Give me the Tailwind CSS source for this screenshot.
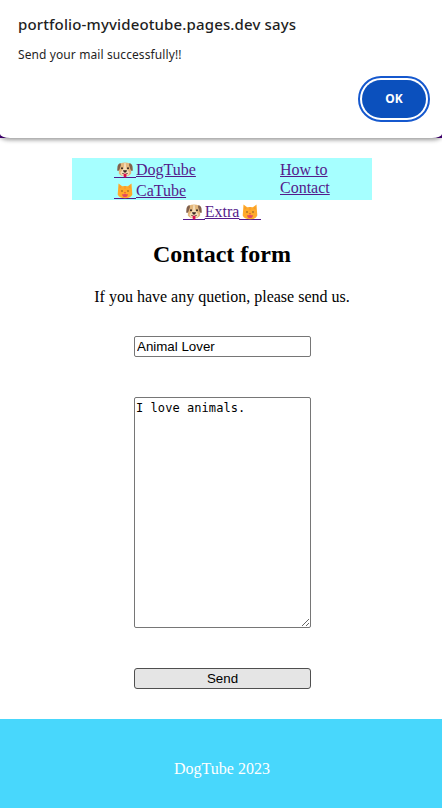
<!DOCTYPE html>
<html lang="en">
<head>
<meta charset="utf-8">
<title>Contact form</title>
<script src="https://cdn.jsdelivr.net/npm/@tailwindcss/browser@4"></script>
</head>
<body class="w-[442px] h-[808px] overflow-hidden bg-white text-black font-['Liberation_Serif',serif] text-[16px] leading-[18px] flex flex-col">
<svg class="hidden">
  <symbol id="dog" viewBox="0 0 16 16">
    <path d="M3 1.500Q8-.5 13 1.500L14 6 14.200 11.500Q12 14.500 8 14.500T1.800 11.500L2 6z" fill="#e3b77c"/>
    <path d="M7.300 1h1.400l.6 5.500 3.200 4Q12 14 8 14.200 4 14 3.500 10.500L6.700 6.500z" fill="#f3dcb8"/>
    <path d="M3.600 1.200Q1 1.500.5 4.500L.2 8.500Q1.500 9.800 2.500 7.500L4 3zM12.400 1.200q2.600.3 3.100 3.300l.3 4q-1.300 1.300-2.300-1L12 3z" fill="#82604b"/>
    <circle cx="5" cy="6.300" r="1" fill="#34231c"/><circle cx="11" cy="6.300" r="1" fill="#34231c"/>
    <path d="M6 8.200h4l-.5 1.500L8 10.500 6.500 9.700z" fill="#38251f"/>
    <path d="M5 11.500Q7.500 11.900 8 10.300q.5 1.600 3 1.200" fill="none" stroke="#51352a" stroke-width=".6"/>
    <path d="M6.600 11.700h2.900v2.400q-.2 1.500-1.400 1.500T6.600 14z" fill="#d80f4f"/>
  </symbol>
  <symbol id="cat" viewBox="0 0 16 16">
    <path d="M1.500 .5 5.200 3.300Q8 2.600 10.800 3.300L14.500 .5 15 7.500 15.300 11.500Q13.800 15.300 8 15.300T.7 11.500L1 7.500z" fill="#ffaa2b"/>
    <path d="M2.500 2.500 4.500 4.300 2.400 5.800zM13.500 2.500 11.500 4.300l2.100 1.500zM7.400 3h1.200v3H7.400z" fill="#f59a2d"/>
    <path d="M4 8.300q1-1.200 2 0M10 8.300q1-1.200 2 0" fill="none" stroke="#7c5020" stroke-width=".9"/>
    <path d="M7 9.200h2l-1 1.200z" fill="#d4384b"/>
    <path d="M5 10.900q1.600.6 3-.2 1.400.8 3 .2-.5 3.200-3 3.200t-3-3.200z" fill="#e44b60"/>
  </symbol>
</svg>

<header class="h-[138px] shrink-0 bg-[#4b0082]">
  <div role="dialog" class="h-[138px] bg-white rounded-b-[10px_4px] shadow-[0_2px_4px_rgba(0,0,0,0.4)] px-[18px] pt-[14px] flex flex-col font-['Noto_Sans',sans-serif] text-[#1f1f1f]">
    <h1 class="text-[15px] leading-[21px] font-medium whitespace-nowrap tracking-[0.14px]">portfolio-myvideotube.pages.dev says</h1>
    <p class="mt-[11px] text-[12px] leading-[18px] tracking-[0.1px]">Send your mail successfully!!</p>
    <button class="self-end mt-[16px] mr-[-2px] w-[64px] h-[38px] rounded-full bg-[#0b50bd] text-white text-[12px] font-bold outline-2 outline-offset-2 outline-[#1558ce]">OK</button>
  </div>
</header>

<main class="flex flex-col items-center pt-[20px] pl-[2px]">
  <nav class="w-[300px] h-[42px] bg-[#a6ffff] flex text-[#551a8b]">
    <div class="w-[208px] pl-[42px] pt-px flex flex-col items-start leading-[21px]">
      <a class="h-[21px] underline flex items-center"><span class="w-[22px] h-[17px] border-b border-[#551a8b] flex justify-center items-end"><svg class="w-[16px] h-[16px] -mb-px"><use href="#dog"/></svg></span>DogTube</a>
      <a class="h-[21px] underline flex items-center"><span class="w-[22px] h-[17px] border-b border-[#551a8b] flex justify-center items-end"><svg class="w-[16px] h-[16px] -mb-px"><use href="#cat"/></svg></span>CaTube</a>
    </div>
    <a class="underline w-[70px] pt-[3px]">How to Contact</a>
  </nav>
  <a class="h-[21px] mt-px text-[#551a8b] underline flex items-center"><span class="w-[22px] h-[17px] border-b border-[#551a8b] flex justify-center items-end"><svg class="w-[16px] h-[16px] -mb-px"><use href="#dog"/></svg></span>Extra<span class="w-[22px] h-[17px] border-b border-[#551a8b] flex justify-center items-end"><svg class="w-[16px] h-[16px] -mb-px"><use href="#cat"/></svg></span></a>
  <h2 class="mt-[19px] text-[24px] leading-[27px] font-bold">Contact form</h2>
  <p class="mt-[20px] h-[18px]">If you have any quetion, please send us.</p>
  <form class="mt-[30px] ml-px w-[177px] flex flex-col">
    <input value="Animal Lover" class="block h-[21px] w-full border border-[#767676] rounded-[2px] px-[2px] py-0 font-['Liberation_Sans',sans-serif] text-[13.33px] bg-white">
    <textarea class="block mt-[40px] h-[231px] w-full border border-[#767676] rounded-[2px] pt-[3px] pl-px font-['DejaVu_Sans_Mono',monospace] text-[12px] leading-[15px] tracking-[0.06px] resize bg-white">I love animals.</textarea>
    <button type="button" class="mt-[40px] h-[21px] w-full border border-[#4f4f4f] rounded-[3px] bg-[#e5e5e5] font-['Liberation_Sans',sans-serif] text-[13.33px] leading-[18px]">Send</button>
  </form>
</main>
<footer class="mt-[30px] h-[89px] shrink-0 bg-[#48d7fc] text-white text-center pt-[41px] pl-[2px]">DogTube 2023</footer>
</body>
</html>
